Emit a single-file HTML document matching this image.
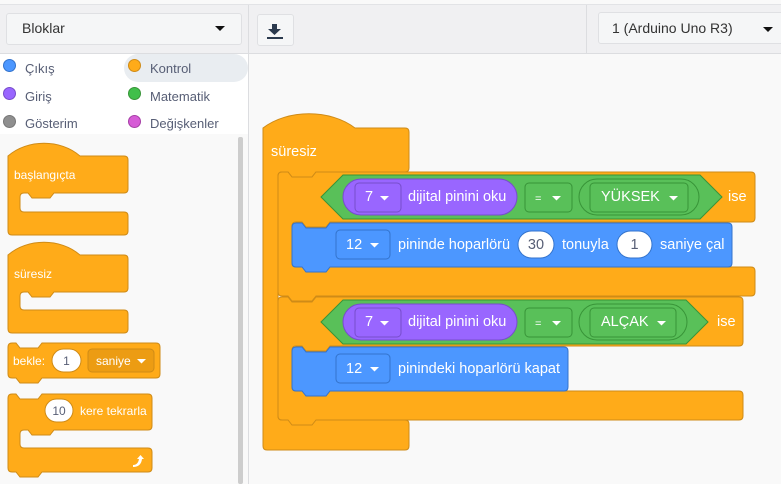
<!DOCTYPE html>
<html><head><meta charset="utf-8"><style>
*{margin:0;padding:0;box-sizing:border-box}
body{width:781px;height:484px;overflow:hidden;background:#f9f9f9;font-family:"Liberation Sans",sans-serif;position:relative}
.a{position:absolute}
.t{position:absolute;color:#fff;font-size:14.5px;line-height:16px;white-space:nowrap}
.d{position:absolute;color:#575e75;font-size:14.5px;line-height:16px;white-space:nowrap}
.p{font-size:12px}
.c{position:absolute;font-size:13px;line-height:16px;color:#575e75;white-space:nowrap}
</style></head><body>
<div class="a" style="left:0;top:0;width:781px;height:5px;background:#f9f9f9;border-bottom:1px solid #e2e3e6"></div>
<div class="a" style="left:0;top:5px;width:781px;height:49px;background:#f0f0f2;border-bottom:1px solid #dcdde0"></div>
<div class="a" style="left:248px;top:5px;width:1px;height:48px;background:#dcdde0"></div>
<div class="a" style="left:586px;top:5px;width:1px;height:48px;background:#dcdde0"></div>
<div class="a" style="left:6px;top:13px;width:236px;height:32px;background:#f5f6f7;border:1px solid #dfe0e3;border-radius:3px"></div>
<div class="a" style="left:22px;top:19px;font-size:14px;line-height:18px;color:#333">Bloklar</div>
<svg class="a" style="left:215px;top:26px" width="10" height="6"><polygon points="0,0 10,0 5,5" fill="#111"/></svg>
<div class="a" style="left:257px;top:14px;width:37px;height:32px;background:#f5f6f7;border:1px solid #dfe0e3;border-radius:3px"></div>
<svg class="a" style="left:266px;top:21px" width="20" height="18"><rect x="6" y="3" width="5" height="6" fill="#2b3a4e"/><polygon points="2,8 15,8 8.5,14" fill="#2b3a4e"/><rect x="1" y="16" width="16" height="2" fill="#2b3a4e"/></svg>
<div class="a" style="left:598px;top:12px;width:200px;height:32px;background:#f5f6f7;border:1px solid #dfe0e3;border-radius:3px"></div>
<div class="a" style="left:612px;top:19px;font-size:14px;line-height:18px;color:#333">1 (Arduino Uno R3)</div>
<svg class="a" style="left:763px;top:27px" width="10" height="6"><polygon points="0,0 10,0 5,5" fill="#111"/></svg>
<div class="a" style="left:0;top:54px;width:249px;height:80px;background:#fff"></div>
<div class="a" style="left:124px;top:54px;width:124px;height:28px;background:#e9edf1;border-radius:14px"></div>
<div class="a" style="left:3px;top:59px;width:13px;height:13px;border-radius:50%;background:#4c97ff;border:1px solid #3373cc"></div>
<div class="a" style="left:3px;top:87px;width:13px;height:13px;border-radius:50%;background:#9966ff;border:1px solid #774dcb"></div>
<div class="a" style="left:3px;top:115px;width:13px;height:13px;border-radius:50%;background:#8f8f8f;border:1px solid #777"></div>
<div class="a" style="left:128px;top:59px;width:13px;height:13px;border-radius:50%;background:#ffab19;border:1px solid #cf8b17"></div>
<div class="a" style="left:128px;top:87px;width:13px;height:13px;border-radius:50%;background:#40bf4a;border:1px solid #389438"></div>
<div class="a" style="left:128px;top:115px;width:13px;height:13px;border-radius:50%;background:#d65cd6;border:1px solid #a63fa6"></div>
<div class="c" style="left:25px;top:61px">Çıkış</div>
<div class="c" style="left:25px;top:89px">Giriş</div>
<div class="c" style="left:25px;top:116px">Gösterim</div>
<div class="c" style="left:150px;top:61px">Kontrol</div>
<div class="c" style="left:150px;top:89px">Matematik</div>
<div class="c" style="left:150px;top:116px">Değişkenler</div>
<div class="a" style="left:238px;top:137px;width:5px;height:347px;background:#cdcdcd;border-radius:2px"></div>
<div class="a" style="left:248px;top:54px;width:1px;height:430px;background:#dcdde0"></div>

<svg class="a" style="left:0;top:0" width="781" height="484" id="blk"></svg>

<div class="t p" style="left:14px;top:167px">başlangıçta</div>
<div class="t p" style="left:14px;top:266px">süresiz</div>
<div class="t p" style="left:13px;top:353px">bekle:</div>
<div class="d p" style="left:52px;top:353px;width:29px;text-align:center">1</div>
<div class="t p" style="left:96px;top:353px">saniye</div>
<div class="d p" style="left:45px;top:403px;width:28px;text-align:center">10</div>
<div class="t p" style="left:80px;top:403px">kere tekrarla</div>

<div class="t" style="left:271px;top:144px">süresiz</div>
<div class="t" style="left:365px;top:189px">7</div>
<div class="t" style="left:408px;top:189px">dijital pinini oku</div>
<div class="t" style="left:535px;top:191px;font-size:11px">=</div>
<div class="t" style="left:601px;top:189px">YÜKSEK</div>
<div class="t" style="left:728px;top:189px">ise</div>
<div class="t" style="left:346px;top:237px">12</div>
<div class="t" style="left:398px;top:237px">pininde hoparlörü</div>
<div class="d" style="left:518px;top:237px;width:36px;text-align:center">30</div>
<div class="t" style="left:562px;top:237px">tonuyla</div>
<div class="d" style="left:617px;top:237px;width:35px;text-align:center">1</div>
<div class="t" style="left:660px;top:237px">saniye çal</div>
<div class="t" style="left:365px;top:314px">7</div>
<div class="t" style="left:408px;top:314px">dijital pinini oku</div>
<div class="t" style="left:535px;top:316px;font-size:11px">=</div>
<div class="t" style="left:601px;top:314px">ALÇAK</div>
<div class="t" style="left:717px;top:314px">ise</div>
<div class="t" style="left:346px;top:361px">12</div>
<div class="t" style="left:398px;top:361px">pinindeki hoparlörü kapat</div>

<script>
(function(){
var O='#ffab19',OS='#cf8b17';
function tp(x,y,w,n,nw){return 'M'+x+','+(y+4)+' q0,-4 4,-4 H'+(x+n)+' l4,5 h'+nw+' l4,-5 H'+(x+w-4)+' q4,0 4,4';}
function ht(x,y,w,hw,hh){return 'M'+x+','+(y+4)+' V'+y+' c'+(hw*0.27)+','+(-hh)+' '+(hw*0.73)+','+(-hh)+' '+hw+',0 H'+(x+w-4)+' q4,0 4,4';}
function C(x,y,w,t,i,m,w2,b,n,nw,h){
 var d=h?ht(x,y,w,h[0],h[1]):tp(x,y,w,n,nw);
 d+=' V'+(y+t-4)+' q0,4 -4,4 H'+(x+i+n+nw+8)+' l-4,5 h'+(-nw)+' l-4,-5 H'+(x+i+4)+' q-4,0 -4,4 V'+(y+t+m-4)+' q0,4 4,4 H'+(x+w2-4)+' q4,0 4,4 V'+(y+t+m+b-4)+' q0,4 -4,4 ';
 if(h&&h[2]) d+='H'+(x+4); else d+='H'+(x+n+nw+8)+' l-4,5 h'+(-nw)+' l-4,-5 H'+(x+4);
 d+=' q-4,0 -4,-4 Z';return d;}
function S(x,y,w,h,n,nw){return tp(x,y,w,n,nw)+' V'+(y+h-4)+' q0,4 -4,4 H'+(x+n+nw+8)+' l-4,5 h'+(-nw)+' l-4,-5 H'+(x+4)+' q-4,0 -4,-4 Z';}
var s='';
function p(d,f,st){s+='<path d="'+d+'" fill="'+f+'" stroke="'+st+'" stroke-width="1"/>';}
function tri(x,y){s+='<polygon points="'+x+','+y+' '+(x+9)+','+y+' '+(x+4.5)+','+(y+4.5)+'" fill="#fff"/>';}
function rr(x,y,w,h,r,f,st){s+='<rect x="'+x+'" y="'+y+'" width="'+w+'" height="'+h+'" rx="'+r+'" fill="'+f+'" stroke="'+st+'"/>';}
p(C(8,156,120,37,12,19,120,23,8,18,[72,17,1]),O,OS);
p(C(8,255,120,37,12,18,120,23,8,18,[72,17,1]),O,OS);
p(S(8,343,152,35,8,18),O,OS);
rr(52,349,29,23,11.5,'#fff','#cf8b17');
rr(88,349,66,23,4,'#ec9c13','#cf8b17');tri(137,359);
p(C(8,394,144,36,12,18,144,24,8,18),O,OS);
rr(45,399,28,23,11.5,'#fff','#cf8b17');
s+='<path d="M133,465 q5,0 6,-6 l-2,0 l3.5,-4 l3.5,4 l-2,0 q-1,8 -9,8z" fill="#fff"/>';
p(C(263,128,146,44,15,248,146,30,10,20,[92,19,1]),O,OS);
p(C(278,172,477,50,14,45,477,29,10,20),O,OS);
p(C(278,297,465,49,14,45,465,29,10,20),O,OS);
p(S(292,223,440,44,10,20),'#4c97ff','#3373cc');
p(S(292,347,276,44,10,20),'#4c97ff','#3373cc');
function hex(y1,y2,r){var m=(y1+y2)/2;s+='<polygon points="321,'+m+' 343,'+y1+' '+(r-22)+','+y1+' '+r+','+m+' '+(r-22)+','+y2+' 343,'+y2+'" fill="#59c059" stroke="#389438"/>';}
hex(175,219,722);hex(300,344,708);
function row(y,pw,bw){
 rr(343,y+4,174,36,18,'#9966ff','#774dcb');
 rr(355,y+8,46,29,4,'#9966ff','#774dcb');tri(380,y+21);
 rr(525,y+8,47,29,4,'#59c059','#389438');tri(552,y+21);
 rr(579,y+4,pw,36,18,'#59c059','#389438');
 rr(590,y+8,bw,29,4,'#59c059','#389438');tri(bw+571,y+21);
}
row(175,120,98);row(300,108,86);
rr(336,230,54,29,4,'#4c97ff','#3373cc');tri(370,243);
rr(518,231,36,27,13.5,'#fff','#3373cc');
rr(617,231,35,27,13.5,'#fff','#3373cc');
rr(336,354,54,29,4,'#4c97ff','#3373cc');tri(370,367);
document.getElementById('blk').innerHTML=s;
})();
</script>
</body></html>
